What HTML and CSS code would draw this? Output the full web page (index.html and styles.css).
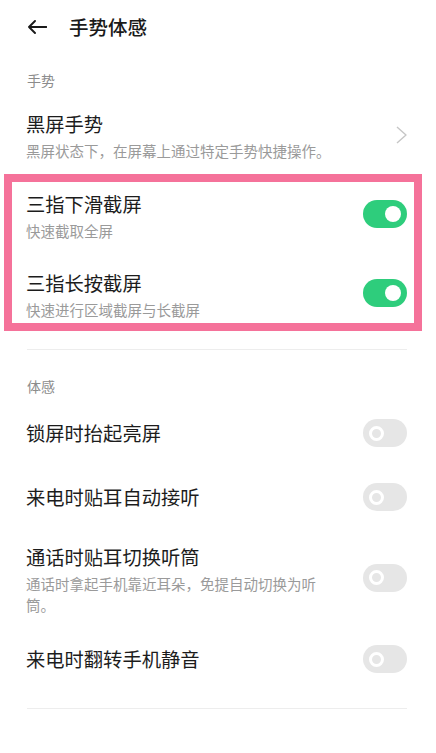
FILE: index.html
```html
<!DOCTYPE html>
<html lang="zh-CN">
<head>
<meta charset="utf-8">
<title>手势体感</title>
<link rel="stylesheet" href="styles.css">
</head>
<body>
<div class="page">
  <header class="header">
    <svg class="back" width="20" height="14" viewBox="0 0 20 14"><path d="M19.5 7H2M8 1L2 7l6 6" fill="none" stroke="#1a1a1a" stroke-width="1.9" stroke-linecap="round" stroke-linejoin="round"/></svg>
    <h1 class="title">手势体感</h1>
  </header>

  <div class="section-label first">手势</div>

  <div class="row nav">
    <div class="text wide">
      <div class="row-title">黑屏手势</div>
      <div class="row-sub">黑屏状态下，在屏幕上通过特定手势快捷操作。</div>
    </div>
    <svg class="chevron" width="11" height="18" viewBox="0 0 11 18"><path d="M1 1l9 8-9 8" fill="none" stroke="#c6c6c6" stroke-width="1.4" stroke-linejoin="round"/></svg>
  </div>

  <div class="highlight">
    <div class="hrow">
      <div class="text">
        <div class="row-title">三指下滑截屏</div>
        <div class="row-sub">快速截取全屏</div>
      </div>
      <span class="toggle on two"><span class="knob"></span></span>
    </div>
    <div class="hrow">
      <div class="text">
        <div class="row-title">三指长按截屏</div>
        <div class="row-sub">快速进行区域截屏与长截屏</div>
      </div>
      <span class="toggle on two"><span class="knob"></span></span>
    </div>
  </div>

  <div class="divider top"></div>

  <div class="section-label second">体感</div>

  <div class="row single first-single">
    <div class="text"><div class="row-title">锁屏时抬起亮屏</div></div>
    <span class="toggle off"><span class="ring"></span></span>
  </div>
  <div class="row single">
    <div class="text"><div class="row-title">来电时贴耳自动接听</div></div>
    <span class="toggle off"><span class="ring"></span></span>
  </div>
  <div class="row double">
    <div class="text">
      <div class="row-title">通话时贴耳切换听筒</div>
      <div class="row-sub">通话时拿起手机靠近耳朵，免提自动切换为听筒。</div>
    </div>
    <span class="toggle off two"><span class="ring"></span></span>
  </div>
  <div class="row single">
    <div class="text"><div class="row-title">来电时翻转手机静音</div></div>
    <span class="toggle off"><span class="ring"></span></span>
  </div>

  <div class="divider bottom"></div>
</div>
</body>
</html>
```

FILE: styles.css
```css
html, body {
  margin: 0;
  padding: 0;
  background: #ffffff;
}

body {
  font-family: "Noto Sans CJK SC", "Noto Sans", sans-serif;
  color: #1c1c1c;
}

.page {
  width: 436px;
  min-height: 753px;
  box-sizing: border-box;
}

.header {
  height: 53px;
  display: flex;
  align-items: center;
  padding-left: 27px;
  box-sizing: border-box;
}

.back {
  display: block;
  margin-top: 1px;
}

.title {
  margin: 0 0 0 22px;
  font-size: 19.5px;
  font-weight: 500;
  line-height: 26px;
  color: #1a1a1a;
}

.section-label {
  font-size: 14px;
  line-height: 20px;
  color: #8c8c8c;
  padding-left: 27px;
}

.section-label.first {
  padding-top: 17px;
}

.section-label.second {
  padding-top: 26px;
}

.row {
  display: flex;
  align-items: center;
  padding: 0 29px 0 26px;
}

.row.nav {
  padding-top: 21px;
  padding-bottom: 13px;
}

.row.single {
  min-height: 64px;
}

.row.first-single {
  margin-top: 5px;
}

.row.double {
  padding-top: 15px;
  padding-bottom: 12px;
}

.text {
  flex: 1;
  min-width: 0;
  padding-right: 40px;
}

.text.wide {
  padding-right: 20px;
}

.row-title {
  font-size: 19.3px;
  line-height: 26px;
  color: #1c1c1c;
}

.row-sub {
  margin-top: 3px;
  font-size: 14.5px;
  line-height: 21px;
  color: #9a9a9a;
}

.chevron {
  display: block;
  flex: none;
  margin-bottom: 3px;
}

.highlight {
  margin: 0 14px 0 4px;
  border: 8px solid #f5729a;
  padding: 9px 7px 3px 14px;
  display: flex;
  flex-direction: column;
  gap: 29px;
}

.hrow {
  display: flex;
  align-items: center;
}

.toggle {
  flex: none;
  width: 44px;
  height: 28px;
  border-radius: 14px;
  display: flex;
  align-items: center;
  padding: 0 6px;
  box-sizing: border-box;
}

.toggle.two {
  margin-bottom: 4px;
}

.toggle.on {
  background: #2ecd7c;
  justify-content: flex-end;
}

.toggle.off {
  background: #e6e6e6;
  justify-content: flex-start;
}

.knob {
  width: 16px;
  height: 16px;
  border-radius: 50%;
  background: #ffffff;
}

.ring {
  width: 15px;
  height: 15px;
  border-radius: 50%;
  border: 3px solid #ffffff;
  box-sizing: border-box;
}

.divider {
  height: 1px;
  background: #ededed;
  margin-left: 27px;
  margin-right: 29px;
}

.divider.top {
  margin-top: 18px;
}

.divider.bottom {
  margin-top: 17px;
}
```
